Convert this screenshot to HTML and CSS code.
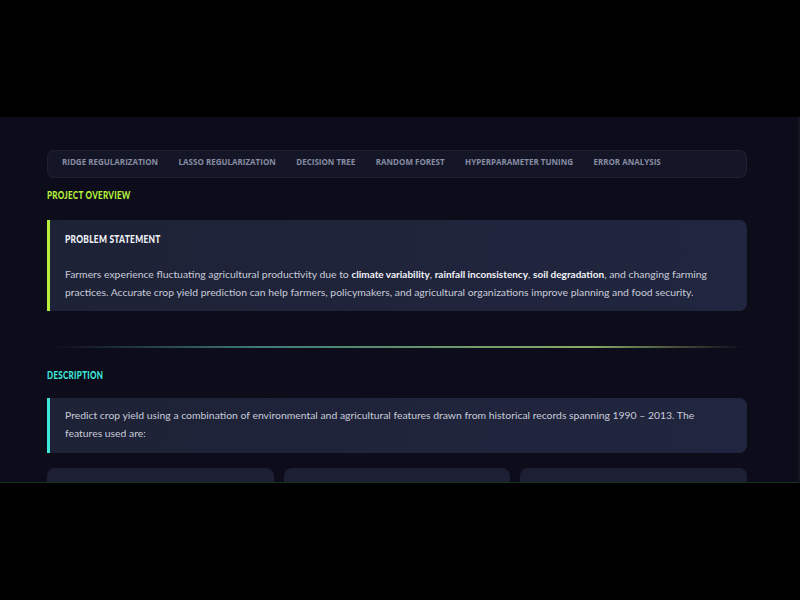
FILE: index.html
```html
<!DOCTYPE html>
<html>

<head>
  <title>Crop Yield Prediction</title>
  <link rel="stylesheet" href="styles.css">
</head>

<body>
  <div class="stage">
    <div class="page">
      <nav class="tabs">
        <a href="#">Ridge Regularization</a>
        <a href="#">Lasso Regularization</a>
        <a href="#">Decision Tree</a>
        <a href="#">Random Forest</a>
        <a href="#">Hyperparameter Tuning</a>
        <a href="#">Error Analysis</a>
      </nav>

      <h3 class="section-label lime"><span>Project Overview</span></h3>
      <div class="panel panel-lime">
        <h4 class="panel-title"><span>Problem Statement</span></h4>
        <p>Farmers experience fluctuating agricultural productivity due to <strong>climate variability</strong>, <strong>rainfall inconsistency</strong>, <strong>soil degradation</strong>, and changing farming practices. Accurate crop yield prediction can help farmers, policymakers, and agricultural organizations improve planning and food security.</p>
      </div>

      <div class="divider"></div>

      <h3 class="section-label cyan"><span>Description</span></h3>
      <div class="panel panel-cyan">
        <p>Predict crop yield using a combination of environmental and agricultural features drawn from historical records spanning 1990 – 2013. The features used are:</p>
      </div>

      <div class="features">
        <div class="feature"></div>
        <div class="feature"></div>
        <div class="feature"></div>
      </div>
    </div>
  </div>
</body>

</html>
```

FILE: styles.css
```css
html,
body {
  margin: 0;
  background: #000;
}

body {
  font-family: Lato, "Open Sans", sans-serif;
  color: #c9ccd9;
}

.stage {
  margin-top: 117px;
  height: 366px;
  overflow: hidden;
  background: #0d0c1a;
  border-right: 2px solid #12161f;
  border-bottom: 1px solid #123318;
  box-sizing: border-box;
}

.page {
  width: 700px;
  margin-left: 47px;
  padding-top: 33px;
}

.tabs {
  display: flex;
  gap: 20.5px;
  height: 28px;
  box-sizing: border-box;
  padding: 5px 14px 0;
  background: #141627;
  border: 1px solid rgba(255, 255, 255, .05);
  border-radius: 8px;
}

.tabs a {
  font-family: "Open Sans", sans-serif;
  font-size: 8px;
  font-weight: 700;
  line-height: 12px;
  text-transform: uppercase;
  color: #878ca3;
  text-decoration: none;
}

/* condensed display headings */
.section-label,
.panel-title {
  font-family: Lato, "DejaVu Sans", sans-serif;
  font-weight: 900;
  text-transform: uppercase;
}

.section-label span,
.panel-title span {
  display: inline-block;
  transform: scaleX(.7);
  transform-origin: left center;
  white-space: nowrap;
}

.section-label {
  margin: 9px 0 0;
  font-size: 11.5px;
  letter-spacing: .4px;
  line-height: 16px;
}

.lime {
  color: #b6f03c;
}

.cyan {
  color: #3de6d9;
}

.panel {
  margin-top: 17px;
  padding: 12px 18px 10px 15px;
  background: linear-gradient(100deg, #1e2236 0%, #212640 100%);
  border-left: 3px solid;
  border-radius: 0 8px 8px 0;
}

.panel-lime {
  border-color: #b6f03c;
}

.panel-cyan {
  border-color: #3de6d9;
  margin-top: 15px;
  padding-top: 9px;
  padding-bottom: 11px;
}

.panel-title {
  margin: 0 0 20px;
  font-size: 12px;
  letter-spacing: .4px;
  line-height: 14px;
  color: #f2f3f8;
}

.panel p {
  margin: 0;
  font-size: 10.4px;
  line-height: 17.5px;
}

.panel strong {
  color: #f2f3f8;
  font-size: 10px;
  font-weight: 700;
}

.divider {
  height: 2px;
  margin: 35px 0 0 6px;
  width: 690px;
  background: linear-gradient(90deg, rgba(60, 120, 120, 0) 0%, #3f7a7a 30%, #6f9a6a 60%, #8aa866 78%, rgba(120, 140, 100, 0) 100%);
}

.section-label.cyan {
  margin-top: 19px;
}

.features {
  display: grid;
  grid-template-columns: repeat(3, 1fr);
  gap: 10px;
  margin-top: 15px;
}

.feature {
  height: 80px;
  background: #1d2034;
  border-radius: 8px;
}
```
